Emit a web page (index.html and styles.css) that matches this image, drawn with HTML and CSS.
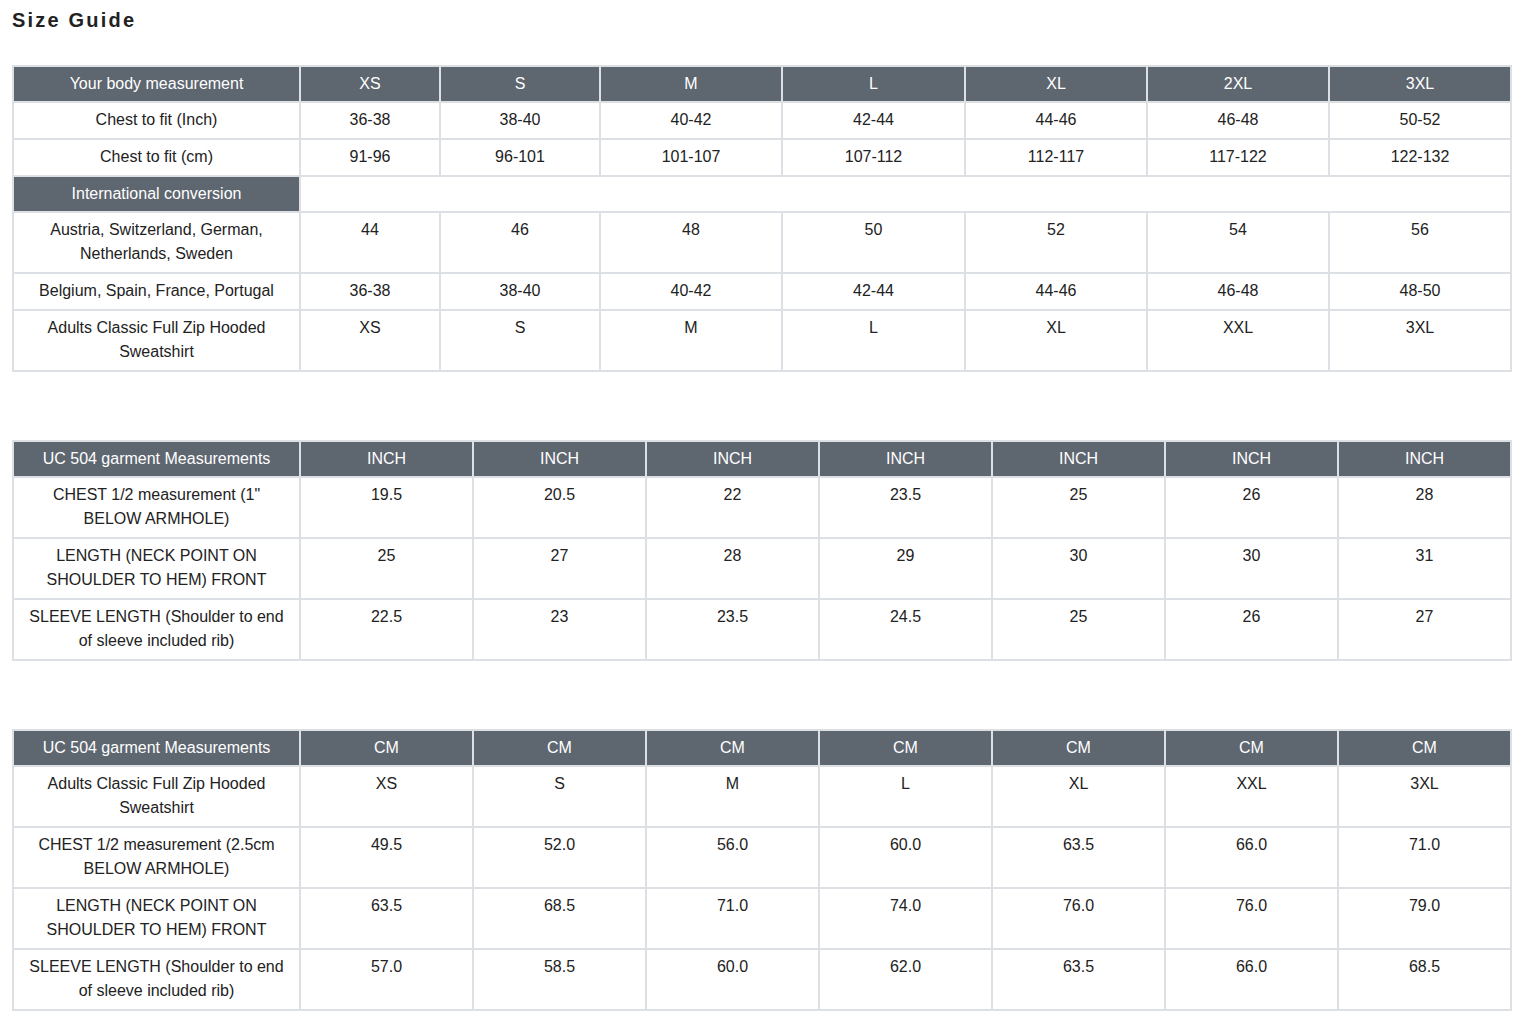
FILE: index.html
```html
<!DOCTYPE html>
<html>
<head>
<meta charset="utf-8">
<title>Size Guide</title>
<link rel="stylesheet" href="styles.css">
</head>
<body>
<h1 class="title">Size Guide</h1>

<table class="grid grid-body">
  <colgroup>
    <col class="c-label"><col class="c-xs"><col class="c-s"><col class="c-m"><col class="c-l"><col class="c-xl"><col class="c-2xl"><col class="c-3xl">
  </colgroup>
  <tr class="head">
    <th>Your body measurement</th><th>XS</th><th>S</th><th>M</th><th>L</th><th>XL</th><th>2XL</th><th>3XL</th>
  </tr>
  <tr><td>Chest to fit (Inch)</td><td>36-38</td><td>38-40</td><td>40-42</td><td>42-44</td><td>44-46</td><td>46-48</td><td>50-52</td></tr>
  <tr><td>Chest to fit (cm)</td><td>91-96</td><td>96-101</td><td>101-107</td><td>107-112</td><td>112-117</td><td>117-122</td><td>122-132</td></tr>
  <tr class="head"><th>International conversion</th><td class="blank" colspan="7"></td></tr>
  <tr><td>Austria, Switzerland, German, Netherlands, Sweden</td><td>44</td><td>46</td><td>48</td><td>50</td><td>52</td><td>54</td><td>56</td></tr>
  <tr><td>Belgium, Spain, France, Portugal</td><td>36-38</td><td>38-40</td><td>40-42</td><td>42-44</td><td>44-46</td><td>46-48</td><td>48-50</td></tr>
  <tr><td>Adults Classic Full Zip Hooded Sweatshirt</td><td>XS</td><td>S</td><td>M</td><td>L</td><td>XL</td><td>XXL</td><td>3XL</td></tr>
</table>

<table class="grid grid-garment">
  <colgroup>
    <col class="c-label"><col class="c-eq"><col class="c-eq"><col class="c-eq"><col class="c-eq"><col class="c-eq"><col class="c-eq"><col class="c-eq">
  </colgroup>
  <tr class="head">
    <th>UC 504 garment Measurements</th><th>INCH</th><th>INCH</th><th>INCH</th><th>INCH</th><th>INCH</th><th>INCH</th><th>INCH</th>
  </tr>
  <tr><td>CHEST 1/2 measurement (1" BELOW ARMHOLE)</td><td>19.5</td><td>20.5</td><td>22</td><td>23.5</td><td>25</td><td>26</td><td>28</td></tr>
  <tr><td>LENGTH (NECK POINT ON SHOULDER TO HEM) FRONT</td><td>25</td><td>27</td><td>28</td><td>29</td><td>30</td><td>30</td><td>31</td></tr>
  <tr><td>SLEEVE LENGTH (Shoulder to end of sleeve included rib)</td><td>22.5</td><td>23</td><td>23.5</td><td>24.5</td><td>25</td><td>26</td><td>27</td></tr>
</table>

<table class="grid grid-garment">
  <colgroup>
    <col class="c-label"><col class="c-eq"><col class="c-eq"><col class="c-eq"><col class="c-eq"><col class="c-eq"><col class="c-eq"><col class="c-eq">
  </colgroup>
  <tr class="head">
    <th>UC 504 garment Measurements</th><th>CM</th><th>CM</th><th>CM</th><th>CM</th><th>CM</th><th>CM</th><th>CM</th>
  </tr>
  <tr><td>Adults Classic Full Zip Hooded Sweatshirt</td><td>XS</td><td>S</td><td>M</td><td>L</td><td>XL</td><td>XXL</td><td>3XL</td></tr>
  <tr><td>CHEST 1/2 measurement (2.5cm BELOW ARMHOLE)</td><td>49.5</td><td>52.0</td><td>56.0</td><td>60.0</td><td>63.5</td><td>66.0</td><td>71.0</td></tr>
  <tr><td>LENGTH (NECK POINT ON SHOULDER TO HEM) FRONT</td><td>63.5</td><td>68.5</td><td>71.0</td><td>74.0</td><td>76.0</td><td>76.0</td><td>79.0</td></tr>
  <tr><td>SLEEVE LENGTH (Shoulder to end of sleeve included rib)</td><td>57.0</td><td>58.5</td><td>60.0</td><td>62.0</td><td>63.5</td><td>66.0</td><td>68.5</td></tr>
</table>
</body>
</html>
```

FILE: styles.css
```css
html, body {
  margin: 0;
  padding: 0;
  background: #ffffff;
}

body {
  padding: 0 12px 0 12px;
  font-family: "Liberation Sans", Arial, sans-serif;
  color: #222222;
}

.title {
  margin: 0;
  padding-top: 8px;
  font-size: 20px;
  line-height: 24px;
  font-weight: bold;
  letter-spacing: 2.2px;
  color: #222222;
}

.grid {
  border-collapse: collapse;
  table-layout: fixed;
  width: 1500px;
  font-size: 16px;
  line-height: 24px;
}

.grid-body {
  margin-top: 33px;
}

.grid-garment {
  margin-top: 68px;
}

.grid th,
.grid td {
  border: 2px solid #dcdfe3;
  text-align: center;
  vertical-align: top;
  padding: 5px 10px 6px 10px;
  font-weight: normal;
}

.grid .head th {
  background: #5e6670;
  color: #ffffff;
  padding: 5px 10px 5px 10px;
}

.grid .head td.blank {
  background: #ffffff;
}

.c-label { width: 287px; }
.c-xs { width: 140px; }
.c-s { width: 160px; }
.c-m { width: 182px; }
.c-l { width: 183px; }
.c-xl { width: 182px; }
.c-2xl { width: 182px; }
.c-3xl { width: 182px; }
.c-eq { width: 173px; }
```
